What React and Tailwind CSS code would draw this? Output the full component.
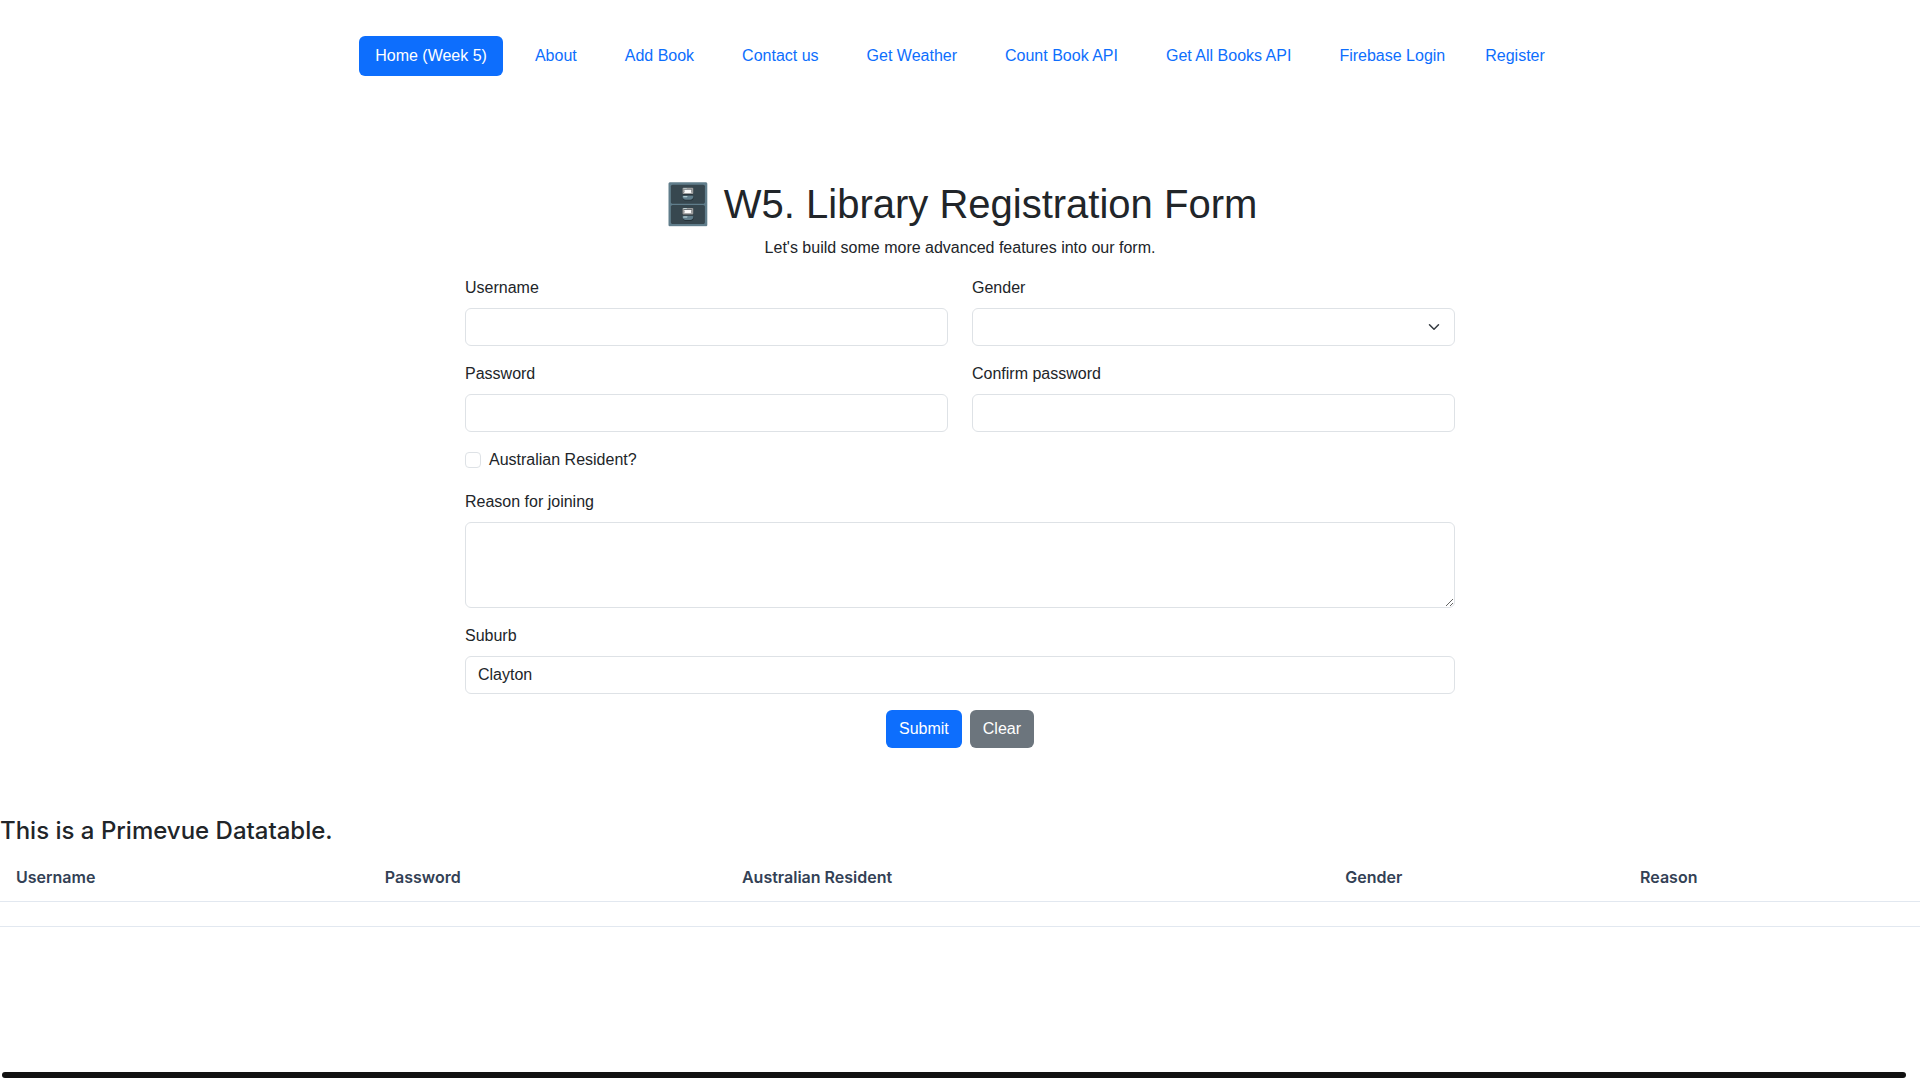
const field =
  'block h-[38px] w-full rounded-md border border-[#dee2e6] bg-white px-3 text-base text-[#212529] outline-none focus:border-[#86b7fe]';

const links = [
  { label: 'Home (Week 5)', active: true },
  { label: 'About' },
  { label: 'Add Book' },
  { label: 'Contact us' },
  { label: 'Get Weather' },
  { label: 'Count Book API' },
  { label: 'Get All Books API' },
  { label: 'Firebase Login' },
];

const columns = ['Username', 'Password', 'Australian Resident', 'Gender', 'Reason'];

function NavLink({ label, active }) {
  return (
    <a
      href="#"
      aria-current={active ? 'page' : undefined}
      className={
        active
          ? 'block rounded-md bg-[#0d6efd] px-4 py-2 text-white'
          : 'block rounded-md px-4 py-2 text-[#0d6efd]'
      }
    >
      {label}
    </a>
  );
}

function Field({ id, label, children }) {
  return (
    <div>
      <label htmlFor={id} className="mb-2 block">
        {label}
      </label>
      {children}
    </div>
  );
}

function ChevronDown() {
  return (
    <svg
      viewBox="0 0 16 16"
      aria-hidden="true"
      className="pointer-events-none absolute top-[13px] right-[15px] size-3"
      fill="none"
      stroke="#343a40"
      strokeLinecap="round"
      strokeLinejoin="round"
      strokeWidth="2"
    >
      <path d="m2 5 6 6 6-6" />
    </svg>
  );
}

export default function App() {
  return (
    <div className="flex min-h-screen flex-col bg-white font-['Liberation_Sans',Arial,sans-serif] text-base text-[#212529]">
      <header className="px-3 pt-9">
        <nav className="flex flex-wrap justify-center gap-2">
          <div className="flex flex-wrap gap-4">
            {links.map((link) => (
              <NavLink key={link.label} {...link} />
            ))}
          </div>
          <NavLink label="Register" />
        </nav>
      </header>

      <main>
        <section className="mx-auto mt-26 w-full max-w-[1014px] px-3">
          <h1 className="mb-2 text-center text-[40px] leading-12">🗄️ W5. Library Registration Form</h1>
          <p className="mb-4 text-center">Let's build some more advanced features into our form.</p>

          <form className="flex flex-col gap-4" onSubmit={(e) => e.preventDefault()}>
            <div className="grid gap-x-6 gap-y-4 md:grid-cols-2">
              <Field id="username" label="Username">
                <input id="username" type="text" className={field} />
              </Field>
              <Field id="gender" label="Gender">
                <div className="relative">
                  <select id="gender" defaultValue="" className={`${field} appearance-none`}>
                    <option value=""></option>
                    <option value="female">Female</option>
                    <option value="male">Male</option>
                    <option value="other">Other</option>
                  </select>
                  <ChevronDown />
                </div>
              </Field>
              <Field id="password" label="Password">
                <input id="password" type="password" className={field} />
              </Field>
              <Field id="confirm-password" label="Confirm password">
                <input id="confirm-password" type="password" className={field} />
              </Field>
            </div>

            <div className="mb-0.5 flex items-center gap-2">
              <input
                id="resident"
                type="checkbox"
                className="size-4 appearance-none rounded border border-[#dee2e6] bg-white checked:border-[#0d6efd] checked:bg-[#0d6efd]"
              />
              <label htmlFor="resident">Australian Resident?</label>
            </div>

            <Field id="reason" label="Reason for joining">
              <textarea
                id="reason"
                rows={3}
                className="block w-full resize-y rounded-md border border-[#dee2e6] bg-white px-3 py-1.5 text-base outline-none focus:border-[#86b7fe]"
              />
            </Field>

            <Field id="suburb" label="Suburb">
              <input id="suburb" type="text" defaultValue="Clayton" className={field} />
            </Field>

            <div className="flex justify-center gap-2">
              <button type="submit" className="h-[38px] rounded-md bg-[#0d6efd] px-[13px] text-white">
                Submit
              </button>
              <button type="reset" className="h-[38px] rounded-md bg-[#6c757d] px-[13px] text-white">
                Clear
              </button>
            </div>
          </form>
        </section>

        <section className="mt-17 font-['Inter',sans-serif]">
          <h2 className="mb-2 text-2xl leading-[29px] font-medium">This is a Primevue Datatable.</h2>
          <table className="w-full border-separate border-spacing-0 text-left text-[#334155]">
            <thead>
              <tr>
                {columns.map((name) => (
                  <th key={name} scope="col" className="border-b border-[#e2e8f0] px-4 py-3 font-semibold">
                    {name}
                  </th>
                ))}
              </tr>
            </thead>
            <tbody>
              <tr>
                {columns.map((name) => (
                  <td key={name} className="border-b border-[#e2e8f0] px-4 py-3" />
                ))}
              </tr>
            </tbody>
          </table>
        </section>
      </main>

      <div aria-hidden="true" className="mt-auto mr-3.5 mb-0.5 ml-0.5 h-1.5 rounded-full bg-[#111111]" />
    </div>
  );
}
